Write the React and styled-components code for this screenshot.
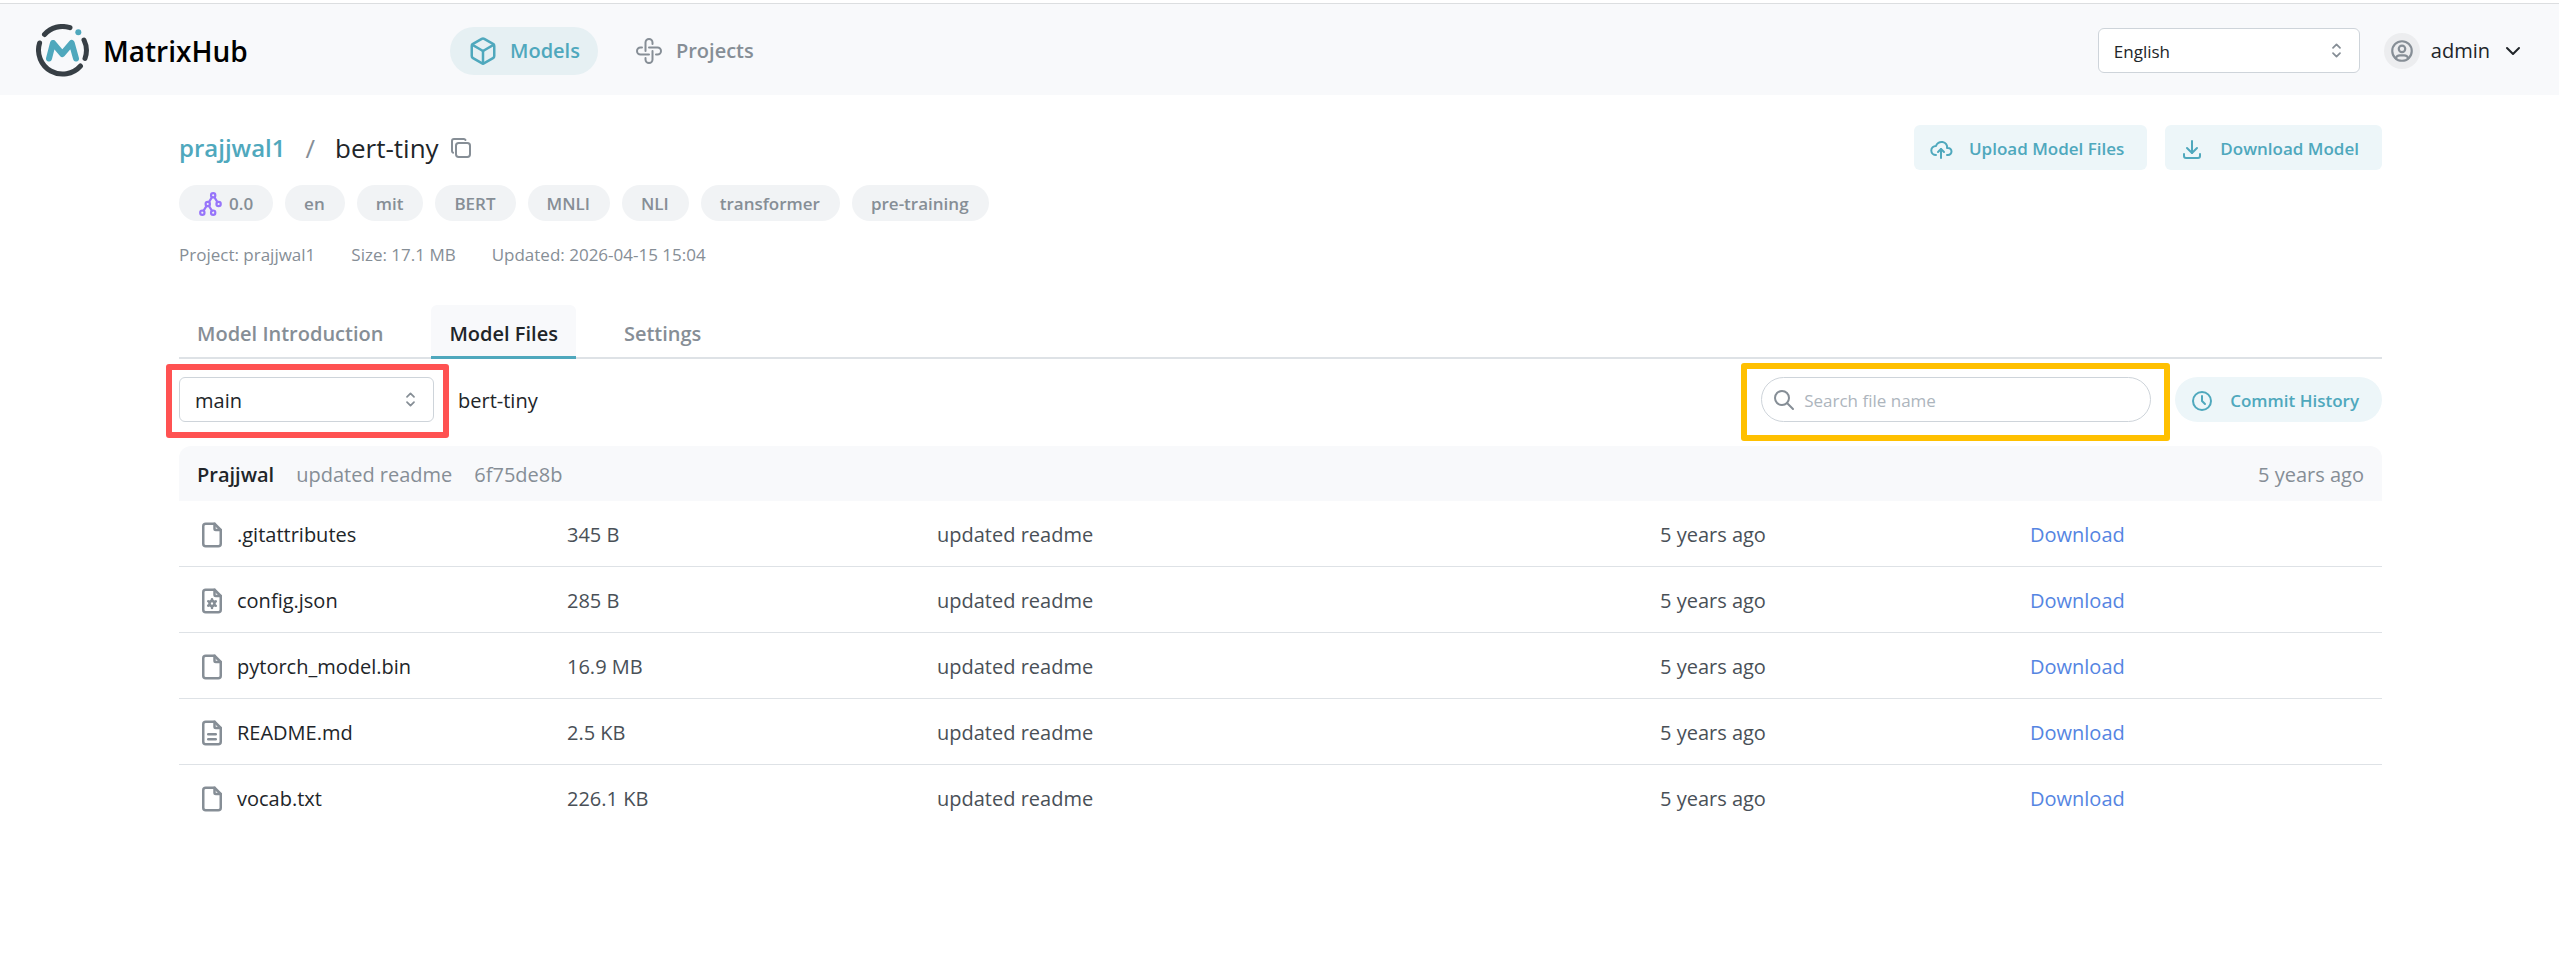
import React from 'react';
import styled, { createGlobalStyle, css } from 'styled-components';
import {
  TbBinaryTree, TbChevronDown, TbClock, TbCloudUpload, TbCopy, TbCube, TbDownload,
  TbFile, TbFileDescription, TbFileSettings, TbSearch, TbSelector, TbUserCircle,
} from 'react-icons/tb';

const color = {
  teal: '#4fa8bd',
  tealSoft: '#edf6f9',
  ink: '#212529',
  body: '#495057',
  muted: '#868e96',
  faint: '#adb5bd',
  line: '#dee2e6',
  border: '#ced4da',
  surface: '#f8f9fb',
  link: '#5585e2',
};

const GlobalStyle = createGlobalStyle`
  *, *::before, *::after { box-sizing: border-box; }
  body {
    margin: 0;
    background: #fff;
    color: ${color.ink};
    font-family: "Open Sans", "Noto Sans", sans-serif;
    font-size: 20px;
    line-height: 30px;
  }
  button, input, select { font: inherit; color: inherit; }
  a { text-decoration: none; }
  svg { display: block; flex: none; }
`;

const Header = styled.header`
  display: flex;
  align-items: center;
  height: 92px;
  margin-top: 3px;
  padding: 2px 34px 0 36px;
  border-top: 1px solid #dcdee0;
  background: ${color.surface};
`;

const Brand = styled.a`
  display: flex;
  align-items: center;
  gap: 14px;
  flex: 0 0 414px;
  color: #000;
  font-size: 28px;
  font-weight: 600;
  line-height: 36px;
`;

const Nav = styled.nav`
  display: flex;
  gap: 18px;
  flex: 1;
`;

const NavLink = styled.a`
  display: flex;
  align-items: center;
  gap: 12px;
  height: 48px;
  padding: 0 18px;
  border-radius: 24px;
  font-weight: 600;
  color: ${(p) => (p.$active ? color.teal : color.muted)};
  background: ${(p) => (p.$active ? '#e6f0f3' : 'transparent')};
`;

const SelectBox = styled.div`
  position: relative;
  width: ${(p) => p.$width};
  color: ${color.muted};

  svg {
    position: absolute;
    right: 13px;
    top: 12px;
    pointer-events: none;
  }
`;

const Select = styled.select`
  display: block;
  appearance: none;
  width: 100%;
  height: 45px;
  padding: 2px 36px 0 15px;
  border: 1px solid ${color.border};
  border-radius: 6px;
  background: #fff;
  color: ${color.ink};
  font-size: ${(p) => (p.$small ? '17px' : '20px')};
`;

const UserButton = styled.button`
  display: flex;
  align-items: center;
  gap: 11px;
  margin-left: 24px;
  padding: 0;
  border: 0;
  background: none;
`;

const Avatar = styled.span`
  display: grid;
  place-items: center;
  width: 36px;
  height: 36px;
  border-radius: 50%;
  background: #ecedef;
  color: ${color.muted};
`;

const Main = styled.main`
  padding: 30px 177px 60px 179px;
`;

const TitleRow = styled.div`
  display: flex;
  align-items: center;
  height: 45px;
`;

const Title = styled.h1`
  display: flex;
  align-items: center;
  gap: 20px;
  flex: 1;
  margin: 0;
  font-size: 26px;
  font-weight: 400;
  line-height: 36px;
`;

const OwnerLink = styled.a`
  color: ${color.teal};
  font-size: 24px;
  font-weight: 600;
`;

const Slash = styled.span`
  color: ${color.muted};
`;

const ModelName = styled.span`
  display: flex;
  align-items: center;
  gap: 10px;
`;

const IconButton = styled.button`
  padding: 0;
  border: 0;
  background: none;
  color: ${color.muted};
`;

const Actions = styled.div`
  display: flex;
  gap: 18px;
`;

const SoftButton = styled.button`
  display: flex;
  align-items: center;
  gap: 16px;
  height: 45px;
  padding: 2px 23px 0 15px;
  border: 0;
  border-radius: ${(p) => (p.$round ? '23px' : '6px')};
  background: ${color.tealSoft};
  color: ${color.teal};
  font-size: 17px;
  font-weight: 600;
  white-space: nowrap;
`;

const Tags = styled.ul`
  display: flex;
  flex-wrap: wrap;
  gap: 12px;
  margin: 15px 0 0;
  padding: 0;
  list-style: none;
`;

const Tag = styled.li`
  display: flex;
  align-items: center;
  gap: 5px;
  height: 36px;
  padding: 2px 20px 0 19px;
  border-radius: 18px;
  background: #f1f3f5;
  color: ${color.muted};
  font-size: 17px;
  font-weight: 600;

  svg { color: #9775fa; }
`;

const Meta = styled.div`
  display: flex;
  gap: 36px;
  margin-top: 20px;
  color: ${color.muted};
  font-size: 17px;
  line-height: 28px;
`;

const Tabs = styled.div`
  display: flex;
  gap: 30px;
  height: 54px;
  margin-top: 36px;
  box-shadow: inset 0 -2px ${color.line};
`;

const Tab = styled.button`
  padding: 6px 18px 0;
  border: 0;
  border-bottom: 3px solid transparent;
  border-radius: 6px 6px 0 0;
  background: none;
  color: ${color.muted};
  font-weight: 600;
  ${(p) => p.$active && css`
    border-bottom-color: ${color.teal};
    background: ${color.surface};
    color: ${color.ink};
  `}
`;

const Toolbar = styled.div`
  display: flex;
  align-items: center;
  margin-top: 18px;
`;

const Marked = styled.div`
  position: relative;

  &::after {
    content: '';
    position: absolute;
    inset: ${(p) => p.$inset};
    border: 6px solid ${(p) => p.$color};
    border-radius: 3px;
    pointer-events: none;
  }
`;

const Path = styled.span`
  flex: 1;
  margin-left: 24px;
  padding-top: 2px;
`;

const SearchBox = styled.label`
  display: flex;
  align-items: center;
  gap: 8px;
  width: 390px;
  height: 45px;
  padding: 0 10px;
  border: 1px solid ${color.border};
  border-radius: 23px;
  background: #fff;
  color: ${color.muted};
`;

const SearchInput = styled.input`
  flex: 1;
  min-width: 0;
  padding: 2px 0 0;
  border: 0;
  outline: 0;
  background: none;
  color: ${color.ink};
  font-size: 17px;

  &::placeholder { color: ${color.faint}; opacity: 1; }
`;

const HistorySlot = styled.div`
  margin-left: 24px;
`;

const CommitBar = styled.div`
  display: flex;
  align-items: center;
  gap: 22px;
  height: 55px;
  margin-top: 24px;
  padding: 2px 18px 0;
  border-radius: 12px 12px 0 0;
  background: ${color.surface};
  color: ${color.muted};

  strong { color: ${color.ink}; font-weight: 600; }
  time { margin-left: auto; }
`;

const FileTable = styled.table`
  width: 100%;
  table-layout: fixed;
  border-collapse: separate;
  border-spacing: 0;
  color: ${color.body};
`;

const Col = styled.col`
  width: ${(p) => p.$width};
`;

const FileRow = styled.tr`
  &:not(:last-child) td { border-bottom: 1px solid ${color.line}; }
`;

const Cell = styled.td`
  height: 66px;
  padding: 2px 18px 0;
`;

const FileName = styled.a`
  display: flex;
  align-items: center;
  gap: 10px;
  color: ${color.ink};

  svg { color: ${color.muted}; }
`;

const DownloadLink = styled.a`
  color: ${color.link};
`;

function Logo() {
  return (
    <svg width="53" height="53" viewBox="0 0 53 53" fill="none" strokeLinecap="round">
      <g stroke="#373f45" strokeWidth="5">
        <path d="M8.5 10.5A24 24 0 0 1 34 3.7" />
        <path d="M48 16A24 24 0 0 1 49 34.5" />
        <path d="M44.5 42A24 24 0 0 1 3.6 19" />
      </g>
      <circle cx="42.3" cy="8.3" r="3" fill={color.teal} />
      <path d="M13 34.5 17 19 26.3 30 35.7 19 40 34.5" stroke={color.teal} strokeWidth="6" strokeLinejoin="round" />
    </svg>
  );
}

function ProjectsIcon() {
  const loop = 'M9.5 13V4.5a3.5 3.5 0 0 1 7 0V6';
  return (
    <svg width="30" height="30" viewBox="-2 -2 30 30" fill="none" stroke="currentColor" strokeWidth="2" strokeLinecap="round">
      {[0, 90, 180, 270].map((angle) => (
        <path key={angle} d={loop} transform={`rotate(${angle} 13 13)`} />
      ))}
    </svg>
  );
}

const tags = ['en', 'mit', 'BERT', 'MNLI', 'NLI', 'transformer', 'pre-training'];

const files = [
  { name: '.gitattributes', size: '345 B', icon: TbFile },
  { name: 'config.json', size: '285 B', icon: TbFileSettings },
  { name: 'pytorch_model.bin', size: '16.9 MB', icon: TbFile },
  { name: 'README.md', size: '2.5 KB', icon: TbFileDescription },
  { name: 'vocab.txt', size: '226.1 KB', icon: TbFile },
];

export default function App() {
  return (
    <>
      <GlobalStyle />
      <Header>
        <Brand href="#"><Logo />MatrixHub</Brand>
        <Nav>
          <NavLink href="#models" $active><TbCube size={30} />Models</NavLink>
          <NavLink href="#projects"><ProjectsIcon />Projects</NavLink>
        </Nav>
        <SelectBox $width="262px">
          <Select $small aria-label="Language" defaultValue="English"><option>English</option></Select>
          <TbSelector size={21} />
        </SelectBox>
        <UserButton type="button">
          <Avatar><TbUserCircle size={26} /></Avatar>
          admin
          <TbChevronDown size={24} />
        </UserButton>
      </Header>
      <Main>
        <TitleRow>
          <Title>
            <OwnerLink href="#prajjwal1">prajjwal1</OwnerLink>
            <Slash>/</Slash>
            <ModelName>
              bert-tiny
              <IconButton type="button" aria-label="Copy name"><TbCopy size={24} /></IconButton>
            </ModelName>
          </Title>
          <Actions>
            <SoftButton type="button"><TbCloudUpload size={24} />Upload Model Files</SoftButton>
            <SoftButton type="button"><TbDownload size={24} />Download Model</SoftButton>
          </Actions>
        </TitleRow>
        <Tags>
          <Tag><TbBinaryTree size={26} />0.0</Tag>
          {tags.map((tag) => <Tag key={tag}>{tag}</Tag>)}
        </Tags>
        <Meta>
          <span>Project: prajjwal1</span>
          <span>Size: 17.1 MB</span>
          <span>Updated: 2026-04-15 15:04</span>
        </Meta>
        <Tabs role="tablist">
          <Tab type="button" role="tab">Model Introduction</Tab>
          <Tab type="button" role="tab" aria-selected="true" $active>Model Files</Tab>
          <Tab type="button" role="tab">Settings</Tab>
        </Tabs>
        <Toolbar>
          <Marked $color="#ff5252" $inset="-13px -15px -16px -13px">
            <SelectBox $width="255px">
              <Select aria-label="Branch" defaultValue="main"><option>main</option></Select>
              <TbSelector size={21} />
            </SelectBox>
          </Marked>
          <Path>bert-tiny</Path>
          <Marked $color="#ffc000" $inset="-14px -19px -19px -20px">
            <SearchBox>
              <TbSearch size={24} />
              <SearchInput type="text" placeholder="Search file name" aria-label="Search file name" />
            </SearchBox>
          </Marked>
          <HistorySlot>
            <SoftButton type="button" $round><TbClock size={24} />Commit History</SoftButton>
          </HistorySlot>
        </Toolbar>
        <CommitBar>
          <strong>Prajjwal</strong>
          <span>updated readme</span>
          <span>6f75de8b</span>
          <time>5 years ago</time>
        </CommitBar>
        <FileTable>
          <colgroup>
            <Col $width="370px" />
            <Col $width="370px" />
            <Col />
            <Col $width="370px" />
            <Col $width="370px" />
          </colgroup>
          <tbody>
            {files.map(({ name, size, icon: Icon }) => (
              <FileRow key={name}>
                <Cell><FileName href={`#${name}`}><Icon size={30} />{name}</FileName></Cell>
                <Cell>{size}</Cell>
                <Cell>updated readme</Cell>
                <Cell>5 years ago</Cell>
                <Cell><DownloadLink href={`#download-${name}`}>Download</DownloadLink></Cell>
              </FileRow>
            ))}
          </tbody>
        </FileTable>
      </Main>
    </>
  );
}
